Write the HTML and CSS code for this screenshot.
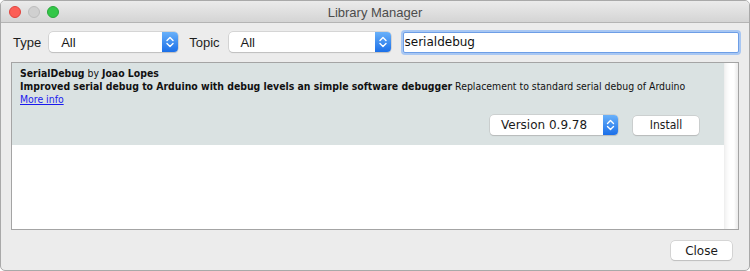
FILE: index.html
```html
<!DOCTYPE html>
<html>
<head>
<meta charset="utf-8">
<link rel="stylesheet" href="styles.css">
</head>
<body>
<div class="window">
  <div class="titlebar">
    <div class="lights">
      <span class="light red"></span>
      <span class="light gray"></span>
      <span class="light green"></span>
    </div>
    <div class="title">Library Manager</div>
  </div>
  <div class="toolbar">
    <span class="label label-type">Type</span>
    <div class="select select-type">
      <span class="select-text">All</span>
      <span class="stepper"><svg width="16" height="20" viewBox="0 0 16 20"><path d="M5 8.5 L8 5.5 L11 8.5 M5 11.5 L8 14.5 L11 11.5" fill="none" stroke="#fff" stroke-width="1.4" stroke-linecap="round" stroke-linejoin="round"/></svg></span>
    </div>
    <span class="label label-topic">Topic</span>
    <div class="select select-topic">
      <span class="select-text">All</span>
      <span class="stepper"><svg width="16" height="20" viewBox="0 0 16 20"><path d="M5 8.5 L8 5.5 L11 8.5 M5 11.5 L8 14.5 L11 11.5" fill="none" stroke="#fff" stroke-width="1.4" stroke-linecap="round" stroke-linejoin="round"/></svg></span>
    </div>
    <div class="search">serialdebug</div>
  </div>
  <div class="list">
    <div class="list-main">
      <div class="item">
        <div class="line"><b>SerialDebug</b> by <b>Joao Lopes</b></div>
        <div class="line"><b>Improved serial debug to Arduino with debug levels an simple software debugger</b> Replacement to standard serial debug of Arduino</div>
        <div class="line"><a class="more" href="#">More info</a></div>
        <div class="actions">
          <div class="select select-version">
            <span class="select-text">Version 0.9.78</span>
            <span class="stepper"><svg width="15" height="20" viewBox="0 0 15 20"><path d="M4.5 8.5 L7.5 5.5 L10.5 8.5 M4.5 11.5 L7.5 14.5 L10.5 11.5" fill="none" stroke="#fff" stroke-width="1.4" stroke-linecap="round" stroke-linejoin="round"/></svg></span>
          </div>
          <div class="button install">Install</div>
        </div>
      </div>
    </div>
    <div class="scrollbar"></div>
  </div>
  <div class="footer">
    <div class="button close">Close</div>
  </div>
</div>
</body>
</html>
```
FILE: styles.css
```css
* { box-sizing: border-box; }
html, body { margin: 0; padding: 0; background: #ffffff; }
.window {
  width: 750px;
  height: 271px;
  border: 1px solid #a9a9a9;
  border-radius: 5px;
  background: #ececec;
  overflow: hidden;
  display: flex;
  flex-direction: column;
}
.titlebar {
  height: 22px;
  flex: none;
  background: linear-gradient(#ebebeb, #d4d4d4);
  border-bottom: 1px solid #b4b4b4;
  position: relative;
  display: flex;
  align-items: center;
  justify-content: center;
}
.lights {
  position: absolute;
  left: 8px;
  top: 5px;
  display: flex;
  gap: 7px;
}
.light {
  width: 12px;
  height: 12px;
  border-radius: 50%;
  display: block;
}
.red { background: #fc5f57; border: 1px solid #e0443e; }
.gray { background: #d0d0d0; border: 1px solid #bdbdbd; }
.green { background: #33c748; border: 1px solid #28a73a; }
.title {
  font-family: "Liberation Sans", Arial, sans-serif;
  font-size: 13px;
  color: #4c4c4c;
  margin-top: 1px;
}
.toolbar {
  display: flex;
  align-items: center;
  padding: 8px 10px 0 12px;
  flex: none;
}
.label {
  font-family: "Liberation Sans", Arial, sans-serif;
  font-size: 13px;
  color: #1e1e1e;
}
.label-type { margin-right: 8px; }
.label-topic { margin-right: 9px; margin-left: 11px; }
.select {
  height: 20px;
  background: #ffffff;
  border-radius: 4px;
  box-shadow: 0 0 0 0.5px #bdbdbd, 0 1px 1px rgba(0,0,0,0.18);
  display: flex;
  align-items: center;
  justify-content: space-between;
  overflow: hidden;
}
.select-text {
  font-family: "Liberation Sans", Arial, sans-serif;
  font-size: 13px;
  color: #1a1a1a;
  padding-left: 12px;
}
.stepper {
  width: 16px;
  height: 20px;
  background: linear-gradient(#69b1fa, #1b6fe8);
  display: block;
}
.stepper svg { display: block; }
.select-type { width: 129px; }
.select-topic { width: 162px; }
.search {
  flex: 1;
  margin-left: 12px;
  height: 21px;
  margin-top: 1px;
  background: #ffffff;
  border: 1px solid #6d9ee6;
  box-shadow: 0 0 0 2px #a8c7f3;
  border-radius: 2px;
  font-family: "DejaVu Sans", Verdana, sans-serif;
  font-size: 12px;
  color: #111;
  padding-left: 1px;
  line-height: 18px;
}
.list {
  margin: 9px 10px 0 10px;
  height: 168px;
  flex: none;
  border: 1px solid #a4a4a4;
  background: #ffffff;
  display: flex;
}
.list-main { flex: 1; }
.item {
  background: #dae2e2;
  padding: 4px 25px 10px 8px;
  font-family: "DejaVu Sans Condensed", "DejaVu Sans", sans-serif;
  font-stretch: condensed;
  font-size: 10.4px;
  color: #111;
}
.line { line-height: 13px; white-space: nowrap; }
.more { color: #1a1aee; text-decoration: underline; }
.actions {
  display: flex;
  justify-content: flex-end;
  align-items: center;
  margin-top: 9px;
  gap: 15px;
}
.select-version { width: 128px; }
.select-version .select-text {
  font-family: "DejaVu Sans", Verdana, sans-serif;
  font-stretch: normal;
  font-size: 12px;
  padding-left: 11px;
}
.select-version .stepper { width: 15px; }
.button {
  font-family: "DejaVu Sans", Verdana, sans-serif;
  font-size: 12px;
  color: #1a1a1a;
  background: #ffffff;
  border-radius: 4px;
  box-shadow: 0 0 0 0.5px #bdbdbd, 0 1px 1px rgba(0,0,0,0.18);
  height: 19px;
  display: flex;
  align-items: center;
  justify-content: center;
}
.install { width: 66px; }
.scrollbar {
  width: 14px;
  flex: none;
  background: linear-gradient(90deg, #ededed 0, #f6f6f6 2px, #fbfbfb 4px, #ffffff 6px, #ffffff 10px, #f2f2f2 12px, #ececec 14px);
}
.footer {
  display: flex;
  justify-content: flex-end;
  padding: 11px 17px 0 0;
}
.close { width: 61px; height: 19px; }
```
